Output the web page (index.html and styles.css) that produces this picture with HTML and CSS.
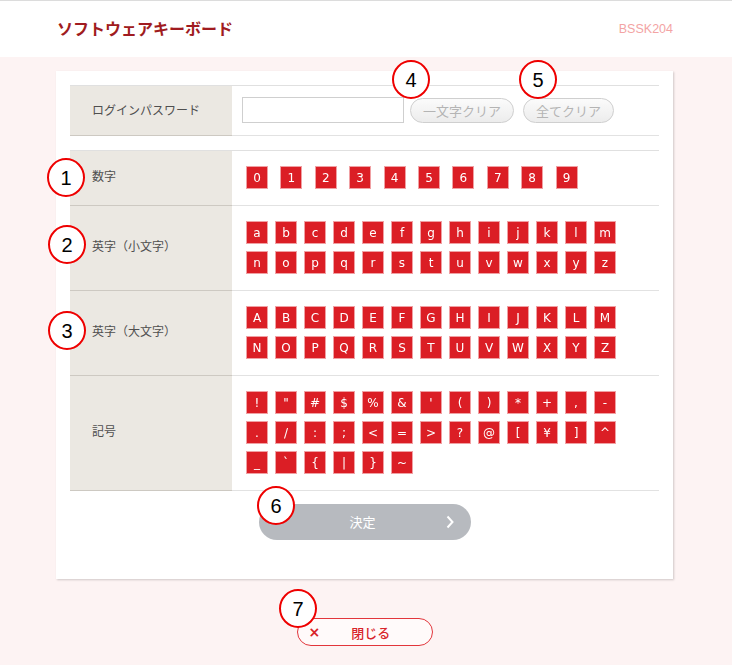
FILE: index.html
```html
<!DOCTYPE html>
<html lang="ja">
<head>
<meta charset="utf-8">
<title>ソフトウェアキーボード</title>
<link rel="stylesheet" href="styles.css">
</head>
<body>
<header class="header">
  <div class="container header-inner">
    <h1 class="title">ソフトウェアキーボード</h1>
    <span class="code">BSSK204</span>
  </div>
</header>
<main class="main">
  <section class="container card">
    <div class="kb">
      <div class="row row-pw">
        <div class="label">ログインパスワード</div>
        <div class="cell cell-pw">
          <input class="pw-input" type="password">
          <button class="clear-btn">一文字クリア</button>
          <button class="clear-btn clear-all">全てクリア</button>
        </div>
      </div>
      <div class="group">
        <div class="row">
          <div class="label">数字</div>
          <div class="cell">
            <div class="keys keys-num">
              <span class="key">0</span><span class="key">1</span><span class="key">2</span><span class="key">3</span><span class="key">4</span><span class="key">5</span><span class="key">6</span><span class="key">7</span><span class="key">8</span><span class="key">9</span>
            </div>
          </div>
        </div>
        <div class="row">
          <div class="label">英字（小文字）</div>
          <div class="cell">
            <div class="keys">
              <span class="key">a</span><span class="key">b</span><span class="key">c</span><span class="key">d</span><span class="key">e</span><span class="key">f</span><span class="key">g</span><span class="key">h</span><span class="key">i</span><span class="key">j</span><span class="key">k</span><span class="key">l</span><span class="key">m</span>
            </div>
            <div class="keys">
              <span class="key">n</span><span class="key">o</span><span class="key">p</span><span class="key">q</span><span class="key">r</span><span class="key">s</span><span class="key">t</span><span class="key">u</span><span class="key">v</span><span class="key">w</span><span class="key">x</span><span class="key">y</span><span class="key">z</span>
            </div>
          </div>
        </div>
        <div class="row">
          <div class="label">英字（大文字）</div>
          <div class="cell">
            <div class="keys">
              <span class="key">A</span><span class="key">B</span><span class="key">C</span><span class="key">D</span><span class="key">E</span><span class="key">F</span><span class="key">G</span><span class="key">H</span><span class="key">I</span><span class="key">J</span><span class="key">K</span><span class="key">L</span><span class="key">M</span>
            </div>
            <div class="keys">
              <span class="key">N</span><span class="key">O</span><span class="key">P</span><span class="key">Q</span><span class="key">R</span><span class="key">S</span><span class="key">T</span><span class="key">U</span><span class="key">V</span><span class="key">W</span><span class="key">X</span><span class="key">Y</span><span class="key">Z</span>
            </div>
          </div>
        </div>
        <div class="row">
          <div class="label">記号</div>
          <div class="cell">
            <div class="keys">
              <span class="key">!</span><span class="key">"</span><span class="key">#</span><span class="key">$</span><span class="key">%</span><span class="key">&amp;</span><span class="key">'</span><span class="key">(</span><span class="key">)</span><span class="key">*</span><span class="key">+</span><span class="key">,</span><span class="key">-</span>
            </div>
            <div class="keys">
              <span class="key">.</span><span class="key">/</span><span class="key">:</span><span class="key">;</span><span class="key">&lt;</span><span class="key">=</span><span class="key">&gt;</span><span class="key">?</span><span class="key">@</span><span class="key">[</span><span class="key">¥</span><span class="key">]</span><span class="key">^</span>
            </div>
            <div class="keys">
              <span class="key">_</span><span class="key">`</span><span class="key">{</span><span class="key">|</span><span class="key">}</span><span class="key">~</span>
            </div>
          </div>
        </div>
      </div>
    </div>
    <div class="submit-wrap">
      <button class="submit">
        <span class="submit-spacer"></span>
        <span class="submit-text">決定</span>
        <svg class="chev" width="8" height="14" viewBox="0 0 8 14"><path d="M1.5 1.5 L6.5 7 L1.5 12.5" fill="none" stroke="#fff" stroke-width="2"/></svg>
      </button>
    </div>
  </section>
  <div class="container close-wrap">
    <button class="close"><span class="close-x">×</span><span class="close-text">閉じる</span></button>
  </div>
</main>

<span class="mark mark-1">1</span>
<span class="mark mark-2">2</span>
<span class="mark mark-3">3</span>
<span class="mark mark-4">4</span>
<span class="mark mark-5">5</span>
<span class="mark mark-6">6</span>
<span class="mark mark-7">7</span>
</body>
</html>
```

FILE: styles.css
```css
* { box-sizing: border-box; }

html, body {
  margin: 0;
  padding: 0;
}

body {
  position: relative;
  min-height: 665px;
  background: #fdf3f3;
  font-family: "Noto Sans CJK JP", "Noto Sans", sans-serif;
  color: #4a4a4a;
}

.container {
  width: 617px;
  margin-left: 56px;
}

/* header */
.header {
  background: #fff;
  border-top: 1px solid #dcdcdc;
  height: 57px;
}

.header-inner {
  display: flex;
  justify-content: space-between;
  align-items: center;
  height: 56px;
  padding-left: 1px;
}

.title {
  margin: 0;
  font-size: 16px;
  font-weight: bold;
  color: #a01b20;
  line-height: 1;
  margin-top: -2px;
}

.code {
  font-family: "Liberation Sans", Arial, sans-serif;
  font-size: 12.5px;
  color: #f3a4a4;
}

/* main */
.main {
  padding-top: 14px;
}

.card {
  background: #fff;
  padding: 14px 14px 39px;
  box-shadow: 1px 1px 2px rgba(0, 0, 0, 0.18);
}

.kb {
  border-top: 1px solid #e0e0e0;
}

.row {
  display: grid;
  grid-template-columns: 162px 1fr;
}

.label {
  background: #ebe8e2;
  border-bottom: 1px solid #cdc9c2;
  padding: 0 0 5px 22px;
  display: flex;
  align-items: center;
  font-size: 12px;
  color: #4f4f4f;
}

.cell {
  border-bottom: 1px solid #e2e2e2;
  padding: 15px 0 15px 14px;
  display: flex;
  flex-direction: column;
  gap: 7px;
}

.row-pw .label,
.row-pw .cell {
  height: 50px;
}

.row-pw .label {
  padding-bottom: 3px;
}

.cell-pw {
  flex-direction: row;
  align-items: center;
  padding: 0 0 1px 10px;
  gap: 0;
}

.pw-input {
  width: 162px;
  height: 26px;
  border: 1px solid #cfcfcf;
  background: #fff;
  margin: 0 6px 0 0;
  padding: 0 4px;
  outline: none;
}

.clear-btn {
  height: 25px;
  padding: 0 12px 1px;
  margin-top: 1px;
  border: 1px solid #cfcfcf;
  border-radius: 13px;
  background: linear-gradient(#fbfbfb, #ececec);
  color: #b4b4b4;
  font-family: "Noto Sans CJK JP", sans-serif;
  font-size: 13px;
  line-height: 1;
  cursor: pointer;
}

.clear-all {
  margin-left: 9px;
}

.group {
  margin-top: 14px;
  border-top: 1px solid #e0e0e0;
}

.keys {
  display: flex;
  gap: 7px;
  will-change: transform;
}

.keys-num {
  gap: 12.4px;
}

.cell .keys:last-child {
  margin-bottom: 1px;
}

.key {
  width: 22px;
  height: 23px;
  background: #db1e25;
  border: 1px solid #f0a0a3;
  color: #fff;
  font-family: "DejaVu Sans", Verdana, sans-serif;
  font-size: 12px;
  display: flex;
  align-items: center;
  justify-content: center;
  line-height: 1;
}

/* submit */
.submit-wrap {
  display: flex;
  justify-content: center;
  margin-top: 13px;
}

.submit {
  width: 212px;
  height: 36px;
  border: none;
  border-radius: 18px;
  background: #b7babf;
  color: #fff;
  font-family: "Noto Sans CJK JP", sans-serif;
  font-size: 13px;
  display: grid;
  grid-template-columns: 1fr auto 1fr;
  align-items: center;
  padding: 0 16px 2px 16px;
}

.submit-text {
  margin-right: 4px;
}

.chev {
  justify-self: end;
  margin-right: 1px;
  margin-top: 2px;
}

/* close */
.close-wrap {
  display: flex;
  justify-content: center;
  margin-top: 39px;
}

.close {
  width: 136px;
  height: 28px;
  border: 1px solid #e2353b;
  border-radius: 14px;
  background: #fffafa;
  display: flex;
  align-items: center;
  padding: 0 12px 0 11px;
  color: #d8242b;
  font-family: "Noto Sans CJK JP", sans-serif;
}

.close-x {
  font-family: "DejaVu Sans", sans-serif;
  font-size: 14px;
  font-weight: bold;
  line-height: 1;
}

.close-text {
  flex: 1;
  text-align: center;
  font-size: 13px;
  font-weight: 500;
  padding-left: 2px;
}

/* annotation marks */
.mark {
  position: absolute;
  width: 38px;
  height: 39px;
  border: 2px solid #ee0000;
  border-radius: 50%;
  background: #fff;
  color: #000;
  font-family: "Liberation Sans", Arial, sans-serif;
  font-size: 20px;
  display: flex;
  align-items: center;
  justify-content: center;
  line-height: 1;
}

.mark-1 { left: 47px; top: 158px; }
.mark-2 { left: 48px; top: 225px; }
.mark-3 { left: 48px; top: 311px; }
.mark-4 { left: 392px; top: 60px; }
.mark-5 { left: 519px; top: 60px; }
.mark-6 { left: 257px; top: 486px; }
.mark-7 { left: 279px; top: 589px; }
```
